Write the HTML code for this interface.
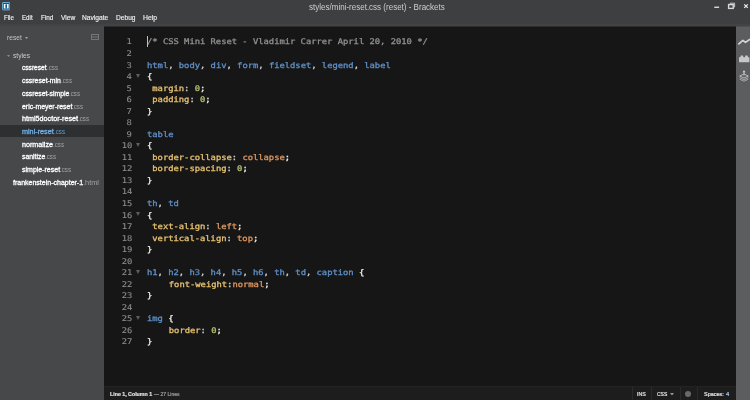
<!DOCTYPE html>
<html lang="en"><head><meta charset="utf-8"><title>styles/mini-reset.css (reset) - Brackets</title>
<style>
*{box-sizing:border-box;margin:0;padding:0}
html,body{width:750px;height:400px;overflow:hidden;background:#161616;font-family:"Liberation Sans",sans-serif}
#app{position:absolute;left:-6px;top:-6px;width:762px;height:412px;overflow:hidden;background:#161616;filter:blur(0.35px)}
#stage{position:absolute;left:6px;top:6px;width:750px;height:400px}
#clip{position:absolute;left:0;top:0;width:750px;height:400px;overflow:hidden}
.fx{position:absolute;white-space:nowrap;transform-origin:0 50%;display:inline-block}
#titlebar{position:absolute;left:0;top:0;width:750px;height:26px;background:#3e3f40;border-bottom:2px solid #424345;box-shadow:-6px -6px 0 #3e3f40,6px -6px 0 #3e3f40,-6px 0 0 #3e3f40,6px 0 0 #3e3f40}
#title{top:0.9px;left:308.6px;font-size:8.6px;line-height:12px;color:#cfcfcf}
.menu{top:11.6px;font-size:7px;line-height:12px;color:#efefef;-webkit-text-stroke:0.15px #efefef}
#appicon{position:absolute;left:1.8px;top:2.4px;width:8.4px;height:8.4px}
.wc{position:absolute}
#sidebar{position:absolute;left:0;top:26px;width:104.4px;height:374px;background:#47484a;box-shadow:-6px 0 0 #47484a,-6px 6px 0 #47484a,0 6px 0 #47484a}
#sidebar .fx{font-size:6.9px;line-height:12.6px}
#proj{top:6.2px;left:7px;color:#c4c5c6;font-size:6.6px!important}
#styles{top:23.8px;left:12.6px;color:#c9cacb;font-size:6.6px!important}
.file{position:absolute;left:0;width:104.4px;height:12.6px;margin-top:-26px}
.file.sel:before{content:'';position:absolute;left:0;top:0.45px;width:104.4px;height:11.5px;background:#2e2f31}
.file .fx{top:0.8px} .nm{color:#fff;-webkit-text-stroke:0.3px #fff}
.ex{color:#a2a3a4}
.file.sel .nm{color:#6fb0e6;-webkit-text-stroke-color:#6fb0e6} .file.sel .ex{color:#5d9ccf}
#editor{position:absolute;left:104.4px;top:26px;width:631.6px;height:360px;border-top:1px solid #2d2d2e;background:#161616}
.ln{position:absolute;left:0;width:736px;height:11.54px;line-height:11.54px;font-family:"DejaVu Sans Mono", "Liberation Mono", monospace;font-size:7.8px;font-weight:normal;letter-spacing:0.0px;white-space:pre;-webkit-text-stroke:0.3px currentColor}
.num{position:absolute;right:604.0px;color:#8b8b8b;font-weight:normal;-webkit-text-stroke:0.12px currentColor;transform:scaleX(1.1285);transform-origin:100% 50%}
.code{position:absolute;left:147.4px;transform:scaleX(1.1285);transform-origin:0 50%}
.fold{position:absolute;left:135.9px;top:2.6px;width:0;height:0;border-left:2.1px solid transparent;border-right:2.1px solid transparent;border-top:4.7px solid #5e5e5e}
.c{color:#8f8f8f;font-weight:normal} .t{color:#5f8fc6} .q{color:#d0d0d0} .b{color:#f0f0e8} .p{color:#e6c070} .n{color:#b3bf70} .v{color:#de9862}
#cursor{position:absolute;left:147.1px;top:35.5px;width:1px;height:11.5px;background:#c0c0c0}
#toolbar{position:absolute;left:736px;top:26px;width:14px;height:374px;border-top:1px solid #4f5052;background:#5c5d5f;box-shadow:6px 0 0 #5c5d5f,6px 6px 0 #5c5d5f,0 6px 0 #5c5d5f}
#status{position:absolute;left:104.4px;top:386px;width:631.6px;height:14px;background:#1d1d1d;border-top:1px solid #232323;box-shadow:0 6px 0 #1d1d1d}
#status .fx{font-size:5.8px;line-height:10px;top:1.6px;color:#e4e4e4;-webkit-text-stroke:0.2px currentColor}
.sdiv{position:absolute;top:0;width:1px;height:14px;background:#2a2a2a}
</style></head><body>
<div id="clip"><div id="app"><div id="stage">
<div id="titlebar">
<svg id="appicon" viewBox="0 0 17 17"><rect x="1" y="1" width="15" height="15" rx="1" fill="#125783" stroke="#66afdc" stroke-width="2"/><path d="M3.6 4.2H7.6V5.6H6.8V11.6H7.6V13H3.6ZM13.4 4.2H9.4V5.6H10.2V11.6H9.4V13H13.4Z" fill="#fff"/></svg>
<span class="fx" id="title" style="transform:scaleX(0.9324)">styles/mini-reset.css (reset) - Brackets</span>
<span class="fx menu" style="transform:scaleX(0.8776);left:4.3px">File</span><span class="fx menu" style="transform:scaleX(0.8788);left:22px">Edit</span><span class="fx menu" style="transform:scaleX(0.9101);left:40.6px">Find</span><span class="fx menu" style="transform:scaleX(0.9437);left:60.7px">View</span><span class="fx menu" style="transform:scaleX(0.9479);left:82.3px">Navigate</span><span class="fx menu" style="transform:scaleX(0.9447);left:115.9px">Debug</span><span class="fx menu" style="transform:scaleX(0.9787);left:142.8px">Help</span>
<svg class="wc" style="left:712px;top:0" width="38" height="12" viewBox="0 0 38 12"><rect x="2.3" y="6.6" width="4.8" height="1.3" fill="#e8e8e8"/><rect x="16.6" y="4.6" width="4.6" height="3.8" fill="none" stroke="#d8d8d8" stroke-width="1.4"/><path d="M18.2 4.2V3.2H22.6V7H21.6" fill="none" stroke="#c8c8c8" stroke-width="1"/><path d="M32.2 4.3L35.8 7.9M35.8 4.3L32.2 7.9" stroke="#f0f0f0" stroke-width="1.2" fill="none"/></svg>
</div>
<div id="sidebar">
<span class="fx" id="proj" style="transform:scaleX(1.0087)">reset</span>
<svg style="position:absolute;left:25.1px;top:11.2px" width="3" height="2.3" viewBox="0 0 4 3"><path d="M0 0H4L2 2.8Z" fill="#a4a5a6"/></svg>
<svg style="position:absolute;left:91px;top:8.2px" width="8" height="6" viewBox="0 0 8 6"><rect x="0.5" y="0.5" width="7" height="5" fill="none" stroke="#76777a" stroke-width="1"/><path d="M0.5 3H7.5" stroke="#76777a" stroke-width="1"/></svg>
<svg style="position:absolute;left:6.9px;top:28.6px" width="3" height="2.3" viewBox="0 0 4 3"><path d="M0 0H4L2 2.8Z" fill="#8a8b8c"/></svg>
<span class="fx" id="styles" style="transform:scaleX(1.0083)">styles</span>
<div class="file" style="top:61.70px"><span class="fx nm" style="transform:scaleX(0.9588);left:22.3px">cssreset</span><span class="fx ex" style="transform:scaleX(0.8968);left:46.7px">.css</span></div>
<div class="file" style="top:74.37px"><span class="fx nm" style="transform:scaleX(0.9958);left:22.3px">cssreset-min</span><span class="fx ex" style="transform:scaleX(0.8968);left:61.0px">.css</span></div>
<div class="file" style="top:87.04px"><span class="fx nm" style="transform:scaleX(0.9880);left:22.3px">cssreset-simple</span><span class="fx ex" style="transform:scaleX(0.8968);left:69.4px">.css</span></div>
<div class="file" style="top:99.71px"><span class="fx nm" style="transform:scaleX(1.0029);left:22.3px">eric-meyer-reset</span><span class="fx ex" style="transform:scaleX(0.8968);left:72.4px">.css</span></div>
<div class="file" style="top:112.38px"><span class="fx nm" style="transform:scaleX(1.0443);left:22.3px">html5doctor-reset</span><span class="fx ex" style="transform:scaleX(0.8968);left:78.1px">.css</span></div>
<div class="file sel" style="top:125.05px"><span class="fx nm" style="transform:scaleX(1.0479);left:22.3px">mini-reset</span><span class="fx ex" style="transform:scaleX(0.8968);left:53.8px">.css</span></div>
<div class="file" style="top:137.72px"><span class="fx nm" style="transform:scaleX(1.0377);left:22.3px">normalize</span><span class="fx ex" style="transform:scaleX(0.8968);left:53.1px">.css</span></div>
<div class="file" style="top:150.39px"><span class="fx nm" style="transform:scaleX(0.9925);left:22.3px">sanitize</span><span class="fx ex" style="transform:scaleX(0.8968);left:45.3px">.css</span></div>
<div class="file" style="top:163.06px"><span class="fx nm" style="transform:scaleX(1.0152);left:22.3px">simple-reset</span><span class="fx ex" style="transform:scaleX(0.8968);left:60.2px">.css</span></div>
<div class="file" style="top:175.73px"><span class="fx nm" style="transform:scaleX(1.0166);left:12.5px">frankenstein-chapter-1</span><span class="fx ex" style="transform:scaleX(1.0711);left:82.9px">.html</span></div>
</div>
<div id="editor"></div>
<div class="ln" style="top:36.43px"><span class="num">1</span><span class="code"><span class="c">/* CSS Mini Reset - Vladimir Carrer April 20, 2010 */</span></span></div>
<div class="ln" style="top:47.97px"><span class="num">2</span><span class="code"></span></div>
<div class="ln" style="top:59.51px"><span class="num">3</span><span class="code"><span class="t">html</span><span class="q">, </span><span class="t">body</span><span class="q">, </span><span class="t">div</span><span class="q">, </span><span class="t">form</span><span class="q">, </span><span class="t">fieldset</span><span class="q">, </span><span class="t">legend</span><span class="q">, </span><span class="t">label</span></span></div>
<div class="ln" style="top:71.05px"><span class="num">4</span><i class="fold"></i><span class="code"><span class="b">{</span></span></div>
<div class="ln" style="top:82.59px"><span class="num">5</span><span class="code"><span class="q"> </span><span class="p">margin</span><span class="q">: </span><span class="n">0</span><span class="b">;</span></span></div>
<div class="ln" style="top:94.13px"><span class="num">6</span><span class="code"><span class="q"> </span><span class="p">padding</span><span class="q">: </span><span class="n">0</span><span class="b">;</span></span></div>
<div class="ln" style="top:105.67px"><span class="num">7</span><span class="code"><span class="b">}</span></span></div>
<div class="ln" style="top:117.21px"><span class="num">8</span><span class="code"></span></div>
<div class="ln" style="top:128.75px"><span class="num">9</span><span class="code"><span class="t">table</span></span></div>
<div class="ln" style="top:140.29px"><span class="num">10</span><i class="fold"></i><span class="code"><span class="b">{</span></span></div>
<div class="ln" style="top:151.83px"><span class="num">11</span><span class="code"><span class="q"> </span><span class="p">border-collapse</span><span class="q">: </span><span class="v">collapse</span><span class="b">;</span></span></div>
<div class="ln" style="top:163.37px"><span class="num">12</span><span class="code"><span class="q"> </span><span class="p">border-spacing</span><span class="q">: </span><span class="n">0</span><span class="b">;</span></span></div>
<div class="ln" style="top:174.91px"><span class="num">13</span><span class="code"><span class="b">}</span></span></div>
<div class="ln" style="top:186.45px"><span class="num">14</span><span class="code"></span></div>
<div class="ln" style="top:197.99px"><span class="num">15</span><span class="code"><span class="t">th</span><span class="q">, </span><span class="t">td</span></span></div>
<div class="ln" style="top:209.53px"><span class="num">16</span><i class="fold"></i><span class="code"><span class="b">{</span></span></div>
<div class="ln" style="top:221.07px"><span class="num">17</span><span class="code"><span class="q"> </span><span class="p">text-align</span><span class="q">: </span><span class="v">left</span><span class="b">;</span></span></div>
<div class="ln" style="top:232.61px"><span class="num">18</span><span class="code"><span class="q"> </span><span class="p">vertical-align</span><span class="q">: </span><span class="v">top</span><span class="b">;</span></span></div>
<div class="ln" style="top:244.15px"><span class="num">19</span><span class="code"><span class="b">}</span></span></div>
<div class="ln" style="top:255.69px"><span class="num">20</span><span class="code"></span></div>
<div class="ln" style="top:267.23px"><span class="num">21</span><i class="fold"></i><span class="code"><span class="t">h1</span><span class="q">, </span><span class="t">h2</span><span class="q">, </span><span class="t">h3</span><span class="q">, </span><span class="t">h4</span><span class="q">, </span><span class="t">h5</span><span class="q">, </span><span class="t">h6</span><span class="q">, </span><span class="t">th</span><span class="q">, </span><span class="t">td</span><span class="q">, </span><span class="t">caption</span><span class="q"> </span><span class="b">{</span></span></div>
<div class="ln" style="top:278.77px"><span class="num">22</span><span class="code"><span class="q" style="margin-right:0.55px">    </span><span class="p">font-weight</span><span class="q">:</span><span class="v">normal</span><span class="b">;</span></span></div>
<div class="ln" style="top:290.31px"><span class="num">23</span><span class="code"><span class="b">}</span></span></div>
<div class="ln" style="top:301.85px"><span class="num">24</span><span class="code"></span></div>
<div class="ln" style="top:313.39px"><span class="num">25</span><i class="fold"></i><span class="code"><span class="t">img</span><span class="q"> </span><span class="b">{</span></span></div>
<div class="ln" style="top:324.93px"><span class="num">26</span><span class="code"><span class="q" style="margin-right:0.55px">    </span><span class="p">border</span><span class="q">: </span><span class="n">0</span><span class="b">;</span></span></div>
<div class="ln" style="top:336.47px"><span class="num">27</span><span class="code"><span class="b">}</span></span></div>
<div id="cursor"></div>
<div id="toolbar">
<svg style="position:absolute;left:2.3px;top:11px" width="12" height="8" viewBox="0 0 12 8"><path d="M0.3 6.3L4.9 2.3L7.5 4.4L12 1.2" fill="none" stroke="#d4d5d6" stroke-width="1.7" stroke-linejoin="round"/></svg>
<svg style="position:absolute;left:3.1px;top:27.9px" width="11" height="8" viewBox="0 0 11 8"><path d="M0 2.2H1.3L1.9 0.5H3.9L4.5 2.2H5.9L6.5 0.5H8.5L9.1 2.2H10.4V7.2H0Z" fill="#c6c7c8"/></svg>
<svg style="position:absolute;left:3.4px;top:43px" width="11" height="12" viewBox="0 0 11 12"><path d="M5 0.9V5.4" fill="none" stroke="#cfd0d1" stroke-width="1"/><path d="M3.5 2.3L5 0.2L6.5 2.3Z" fill="#cfd0d1"/><path d="M0.7 6L5 4L9.3 6L5 8Z" fill="none" stroke="#c8c9ca" stroke-width="0.85"/><path d="M0.7 7.7L5 9.7L9.3 7.7M0.7 9.2L5 11.2L9.3 9.2" fill="none" stroke="#b8b9ba" stroke-width="0.8"/></svg>
</div>
<div id="status">
<span class="fx" style="transform:scaleX(0.9075);left:5.5px;font-weight:bold;color:#e2e2e2">Line 1, Column 1</span>
<span class="fx" style="transform:scaleX(0.8729);left:49.2px;color:#a0a0a0">— 27 Lines</span>
<i class="sdiv" style="left:527.2px"></i><i class="sdiv" style="left:546.6px"></i><i class="sdiv" style="left:575.2px"></i><i class="sdiv" style="left:593px"></i>
<span class="fx" style="transform:scaleX(0.9202);left:532.4px">INS</span>
<span class="fx" style="transform:scaleX(0.8556);left:552.5px">CSS</span>
<svg style="position:absolute;left:565.8px;top:5.6px" width="4" height="3" viewBox="0 0 4 3"><path d="M0 0H4L2 2.6Z" fill="#9a9a9a"/></svg>
<i style="position:absolute;left:580.9px;top:3.6px;width:6px;height:6px;border-radius:50%;background:#6a6a6a"></i>
<span class="fx" style="transform:scaleX(0.9450);left:599.3px">Spaces:</span>
<span class="fx" style="transform:scaleX(0.9894);left:621.3px;color:#a9c8e8">4</span>
</div>
</div></div></div>
</body></html>
